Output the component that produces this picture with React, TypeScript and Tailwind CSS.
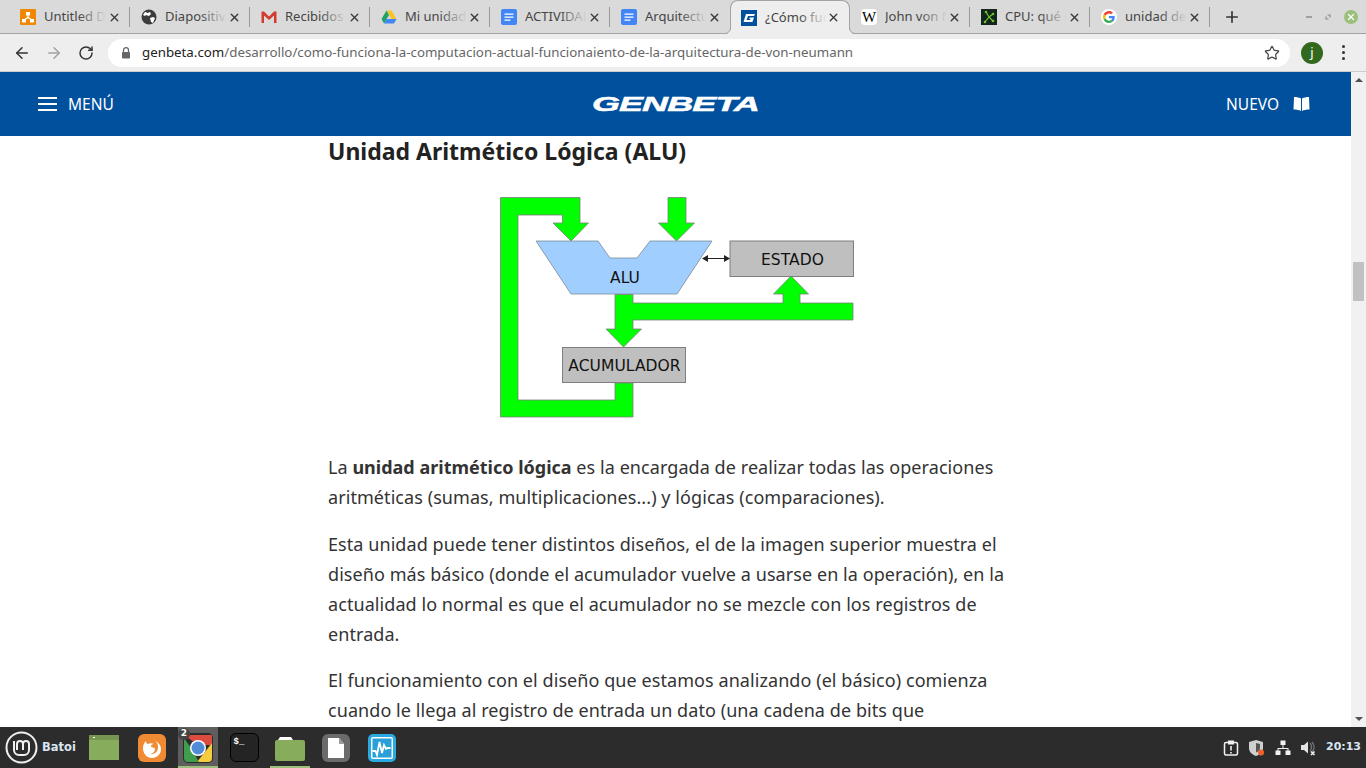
import { ArrowLeft, ArrowRight, RotateCw, Star, Plus, X } from "lucide-react";
import type { ReactNode } from "react";

const uiFont = "font-['Noto_Sans',sans-serif]";

function DocsIcon() {
    return (
        <svg width="16" height="16" viewBox="0 0 16 16">
            <rect width="16" height="16" rx="2" fill="#4285f4" />
            <path d="M3.500 4.500h9v1.300h-9zM3.500 7.500h9v1.300h-9zM3.500 10.500h6v1.300h-6z" fill="#fff" />
        </svg>
    );
}

const tabs: { title: string; icon: ReactNode; active?: boolean }[] = [
    {
        title: "Untitled Diagram",
        icon: (
            <svg width="16" height="16" viewBox="0 0 16 16">
                <rect width="16" height="16" rx="1" fill="#f08705" />
                <path d="M6 3h4v3.500H8.600v1.600l3 1.900H14v3.500h-4V10.600L8 9.300l-2 1.300v2.900H2V10h2.400l3-1.900V6.500H6z" fill="#fff" />
            </svg>
        ),
    },
    {
        title: "Diapositivas",
        icon: (
            <svg width="16" height="16" viewBox="0 0 16 16">
                <circle cx="8" cy="8" r="7.500" fill="#3c3c3c" />
                <path d="M4 3l3 1 2-1 1 2-2 2-3-1-1 1-2-1zM9 9l3-1 2 1-2 5-2-1z" fill="#fff" />
            </svg>
        ),
    },
    {
        title: "Recibidos",
        icon: (
            <svg width="16" height="16" viewBox="0 0 16 16">
                <path d="M0.500 2.500h2.500L8 7.500l5-5h2.500V14H13V6.500L8 11 3 6.500V14H0.500z" fill="#d33b2e" />
            </svg>
        ),
    },
    {
        title: "Mi unidad",
        icon: (
            <svg width="16" height="16" viewBox="0 0 16 16">
                <path d="M5.500 1.500h5L15.500 10h-5z" fill="#f7c325" />
                <path d="M5.500 1.500L.500 10 3 14.500 8 6z" fill="#1fa463" />
                <path d="M3 14.500h10L15.500 10h-10z" fill="#4285f4" />
            </svg>
        ),
    },
    { title: "ACTIVIDADES", icon: <DocsIcon /> },
    { title: "Arquitectura", icon: <DocsIcon /> },
    {
        title: "¿Cómo funciona",
        active: true,
        icon: (
            <svg width="16" height="16" viewBox="0 0 16 16">
                <rect width="16" height="16" fill="#00509d" />
                <path d="M5 4h9l-1 2H7L5.500 10H9l.5-1.200H8L8.700 7.500H13l-1.600 4.500H2.500z" fill="#fff" />
            </svg>
        ),
    },
    {
        title: "John von Neumann",
        icon: (
            <div className="flex h-4 w-4 items-center justify-center rounded-sm bg-white font-['Liberation_Serif',serif] text-[15px] leading-none text-black">
                W
            </div>
        ),
    },
    {
        title: "CPU: qué es",
        icon: (
            <svg width="16" height="16" viewBox="0 0 16 16">
                <rect width="16" height="16" fill="#14251c" />
                <path d="M4 13L8 8 5 3M8 8l4-3M8 8l4 4" stroke="#6cc72b" strokeWidth="1.200" fill="none" />
                <circle cx="4" cy="13" r="1.300" fill="#6cc72b" />
                <circle cx="5" cy="3" r="1.300" fill="#6cc72b" />
                <circle cx="12" cy="5" r="1.300" fill="#6cc72b" />
                <circle cx="12" cy="12" r="1.300" fill="#6cc72b" />
            </svg>
        ),
    },
    {
        title: "unidad de control",
        icon: (
            <div className="flex h-4 w-4 items-center justify-center rounded-full bg-white">
                <svg width="12" height="12" viewBox="0 0 48 48">
                    <path fill="#EA4335" d="M24 9.500c3.500 0 6.700 1.300 9.100 3.400l6.800-6.800C35.800 2.400 30.300 0 24 0 14.600 0 6.500 5.400 2.600 13.200l7.900 6.100C12.400 13.700 17.700 9.500 24 9.500z" />
                    <path fill="#4285F4" d="M47 24.500c0-1.600-.2-3.100-.4-4.500H24v9h12.900c-.6 3-2.300 5.500-4.800 7.200l7.700 6C44.300 38 47 31.800 47 24.500z" />
                    <path fill="#FBBC05" d="M10.500 28.700C10 27.200 9.800 25.600 9.800 24s.3-3.200.7-4.700l-7.900-6.100C1 16.400 0 20.100 0 24s1 7.600 2.600 10.800l7.900-6.100z" />
                    <path fill="#34A853" d="M24 48c6.500 0 11.900-2.100 15.900-5.800l-7.700-6c-2.200 1.400-4.900 2.300-8.200 2.300-6.300 0-11.600-4.200-13.500-9.900l-7.900 6.100C6.500 42.600 14.600 48 24 48z" />
                </svg>
            </div>
        ),
    },
];

function TabStrip() {
    return (
        <div className={`flex h-[34px] shrink-0 items-stretch border-b border-[#a3a3a3] bg-[#dadada] pl-[10px] ${uiFont}`}>
            {tabs.map((t, i) => {
                const nextActive = tabs[i + 1]?.active;
                return (
                    <div
                        key={t.title}
                        className={`relative -mb-px flex w-[120px] shrink-0 items-center pr-[9px] ${i === 0 || t.active ? "pl-[10px]" : "pl-[11px]"} ${t.active ? "rounded-t-lg border border-b-0 border-[#a3a3a3] bg-[#eeeeee]" : ""}`}
                    >
                        {t.active && (
                            <>
                                {/* little flares where the active tab meets the toolbar */}
                                <svg width="6" height="6" viewBox="0 0 6 6" className="absolute -left-[6px] bottom-0">
                                    <path d="M6 0v6H0c3 0 5-2 6-6z" fill="#eeeeee" />
                                    <path d="M0 5.500c3 0 5-2 5.500-5.500" fill="none" stroke="#a3a3a3" />
                                </svg>
                                <svg width="6" height="6" viewBox="0 0 6 6" className="absolute -right-[6px] bottom-0">
                                    <path d="M0 0v6h6C3 6 1 4 0 0z" fill="#eeeeee" />
                                    <path d="M6 5.500C3 5.500 1 3.500.500 0" fill="none" stroke="#a3a3a3" />
                                </svg>
                            </>
                        )}
                        {t.icon}
                        <div className="relative ml-2 w-[62px] overflow-hidden whitespace-nowrap text-[13px] text-[#454545]">
                            {t.title}
                            <div className={`absolute inset-y-0 right-0 w-7 bg-gradient-to-r from-transparent ${t.active ? "to-[#eeeeee]" : "to-[#dadada]"}`} />
                        </div>
                        <X size={13} strokeWidth={2.500} className="ml-auto text-[#3a3a3a]" />
                        {!t.active && !nextActive && (
                            <div className="absolute right-0 top-[7px] h-[20px] w-px bg-[#9a9a9a]" />
                        )}
                    </div>
                );
            })}
            <div className="flex w-[44px] items-center justify-center">
                <Plus size={18} strokeWidth={2.200} className="text-[#333]" />
            </div>
            {/* window buttons */}
            <div className="ml-auto flex items-center gap-[13px] pr-[8px]">
                <div className="h-[2px] w-[6px] bg-[#a0a0a0]" />
                <svg width="6" height="6" viewBox="0 0 6 6" fill="none" stroke="#8c8c8c" strokeWidth="1.200">
                    <path d="M2.500 1H5v2.500M3.500 5H1V2.500" />
                </svg>
                <div className="flex h-[14px] w-[14px] items-center justify-center rounded-full bg-[#9cbf7c]">
                    <X size={10} strokeWidth={3} className="text-white" />
                </div>
            </div>
        </div>
    );
}

function Toolbar() {
    return (
        <div className="flex h-[38px] shrink-0 items-center border-b border-[#cdcdcd] bg-[#eeeeee] pl-[13px]">
            <ArrowLeft size={18} strokeWidth={2} className="text-[#333]" />
            <ArrowRight size={18} strokeWidth={2} className="ml-[14px] text-[#a2a2a2]" />
            <RotateCw size={16} strokeWidth={2.200} className="ml-[15px] text-[#333]" />
            <div className={`ml-[14px] flex h-[28px] w-[1182px] items-center rounded-full bg-white pl-[13px] ${uiFont}`}>
                <svg width="10" height="12" viewBox="0 0 10 12" className="shrink-0">
                    <path d="M2.500 5V3.200a2.500 2.500 0 0 1 5 0V5" fill="none" stroke="#666" strokeWidth="1.300" />
                    <rect x="1" y="5" width="8" height="6.500" rx="0.800" fill="#666" />
                </svg>
                <div className="ml-[11px] whitespace-nowrap text-[13.300px] text-[#666]">
                    <span className="text-[#222]">genbeta.com</span>
                    /desarrollo/como-funciona-la-computacion-actual-funcionaiento-de-la-arquitectura-de-von-neumann
                </div>
                <Star size={16} strokeWidth={1.800} className="ml-auto mr-[10px] text-[#444]" />
            </div>
            <div className={`ml-[11px] flex h-[22px] w-[22px] items-center justify-center rounded-full bg-[#33691e] text-[13px] text-white ${uiFont}`}>
                j
            </div>
            <div className="ml-[19px] flex flex-col gap-[3px]">
                <div className="h-[3px] w-[3px] rounded-full bg-[#333]" />
                <div className="h-[3px] w-[3px] rounded-full bg-[#333]" />
                <div className="h-[3px] w-[3px] rounded-full bg-[#333]" />
            </div>
        </div>
    );
}

function AluDiagram() {
    const green = "#00ff00";
    const edge = "#7f7f7f";
    return (
        <svg width="380" height="240" viewBox="490 185 380 240" className="block">
            <path d="M500.500 197.500H580V223H588.500L571 241 553 223H562.500V215H518V400H615V383H633V417H500.500Z" fill={green} stroke={edge} strokeWidth="0.800" />
            <path d="M668 197.500H686V223H694.500L676.500 241 658.500 223H668Z" fill={green} stroke={edge} strokeWidth="0.800" />
            <path d="M536 241H598L610 258H637L650 241H712L677 294H571Z" fill="#a0cfff" stroke="#7a8a9a" strokeWidth="0.800" />
            <path d="M615 294.500H633V303H783V294H773.500L791 276 808.500 294H800V303H853V320H633V329H641.500L623.500 347 606 329H615Z" fill={green} stroke={edge} strokeWidth="0.800" />
            <rect x="730" y="241" width="123.500" height="35.500" fill="#bfbfbf" stroke={edge} />
            <rect x="562.500" y="347.500" width="123" height="35" fill="#bfbfbf" stroke={edge} />
            <path d="M706 258.500H726" stroke="#222" strokeWidth="1" />
            <path d="M702 258.500l6-3.500v7zM730 258.500l-6-3.500v7z" fill="#222" />
            <g fontFamily="'DejaVu Sans', sans-serif" fontSize="15.500" fill="#111" textAnchor="middle">
                <text x="625" y="282.500">ALU</text>
                <text x="792.500" y="264.500">ESTADO</text>
                <text x="624.500" y="370.500">ACUMULADOR</text>
            </g>
        </svg>
    );
}

function Article() {
    return (
        <article className="w-[677px] shrink-0 font-['Noto_Sans',sans-serif] text-[18px] leading-[30px] tracking-[0.07px] text-[#333]">
            <h2 className="text-[23px] font-bold leading-[30px] tracking-normal text-[#222]">Unidad Aritmético Lógica (ALU)</h2>
            <div className="mb-[27px] ml-[162px] mt-[19px]">
                <AluDiagram />
            </div>
            <p className="mb-[17px]">
                La <strong className="tracking-normal">unidad aritmético lógica</strong> es la encargada de realizar todas las operaciones aritméticas (sumas, multiplicaciones...) y lógicas (comparaciones).
            </p>
            <p className="mb-[16px]">
                Esta unidad puede tener distintos diseños, el de la imagen superior muestra el diseño más básico (donde el acumulador vuelve a usarse en la operación), en la actualidad lo normal es que el acumulador no se mezcle con los registros de entrada.
            </p>
            <p>
                El funcionamiento con el diseño que estamos analizando (el básico) comienza cuando le llega al registro de entrada un dato (una cadena de bits que representa una instrucción)
            </p>
        </article>
    );
}

function Scrollbar() {
    return (
        <div className="relative w-[15px] shrink-0 bg-[#f1f1f1]">
            <div className="absolute left-[4px] top-[6px] h-0 w-0 border-x-[4px] border-b-[4px] border-x-transparent border-b-[#505050]" />
            <div className="absolute left-[2px] top-[190px] h-[39px] w-[11px] bg-[#c1c1c1]" />
            <div className="absolute bottom-[6px] left-[4px] h-0 w-0 border-x-[4px] border-t-[4px] border-x-transparent border-t-[#505050]" />
        </div>
    );
}

function Taskbar() {
    const cell = "relative flex h-full w-[46px] items-center justify-center";
    return (
        <div className="flex h-[41px] shrink-0 items-center bg-[#2c2c2c] pl-[5px]">
            <svg width="33" height="33" viewBox="0 0 33 33">
                <circle cx="16.500" cy="16.500" r="15" fill="none" stroke="#efefef" strokeWidth="2" />
                <path d="M9 10v9a5 5 0 0 0 5 5h5a5 5 0 0 0 5-5v-6a3 3 0 0 0-6 0v6M18 13a3 3 0 0 0-6 0v6" fill="none" stroke="#efefef" strokeWidth="2" />
            </svg>
            <span className="ml-[4px] w-[39px] font-['DejaVu_Sans',sans-serif] text-[11.500px] font-bold text-[#d8e6f2]">Batoi</span>
            <div className="flex h-full">
                <div className={cell}>
                    <div className="relative h-[25px] w-[30px] border-t-[5px] border-[#76964f] bg-[#87ac5c]">
                        <div className="absolute left-[4px] -top-[3px] h-px w-[2px] bg-white" />
                    </div>
                </div>
                <div className={`${cell} ml-[2px]`}>
                    <svg width="28" height="28" viewBox="0 0 28 28">
                        <rect width="28" height="28" rx="6" fill="#f08a33" />
                        <path d="M5 14c0-3 1-5 3-7 0 2 1 3 2 3 2-1 4-1 6 0-2 0-3 1-3 2 0 2 4 1 4 3 0 3-3 5-5 5 4 1 8-2 8-7 0-3-1-5-3-6 3 1 6 4 6 8 0 5-4 9-9 9s-9-4-9-10z" fill="#fff" />
                    </svg>
                </div>
                <div className={cell}>
                    <div className="absolute inset-y-0 left-[3px] w-[40px] bg-[#5e5e5e]">
                        <div className="absolute bottom-0 inset-x-0 h-[2px] bg-[#9cbf7c]" />
                    </div>
                    <svg width="30" height="30" viewBox="0 0 30 30" className="relative">
                        <rect width="30" height="30" rx="5" fill="#2c2c2c" />
                        <path d="M1 2h28v10H15z" fill="#dd4b3e" />
                        <path d="M29 10v15a4 4 0 0 1-4 4H14z" fill="#f8cd3d" />
                        <path d="M1 5v20a4 4 0 0 0 4 4h11L8 15z" fill="#3f9d4d" />
                        <circle cx="15" cy="15" r="8" fill="#fff" />
                        <circle cx="15" cy="15" r="6.500" fill="#4f8bd6" />
                    </svg>
                    <div className="absolute left-[3px] top-[1px] flex h-[12px] w-[12px] items-center justify-center rounded-full bg-[#444] font-['DejaVu_Sans',sans-serif] text-[9px] font-bold text-white">
                        2
                    </div>
                </div>
                <div className={cell}>
                    <div className="h-[29px] w-[29px] rounded-md border border-black bg-[#242424] px-[3px] pt-[1px] font-['Liberation_Mono',monospace] text-[9px] font-bold leading-[14px] text-white">
                        $_
                    </div>
                </div>
                <div className={cell}>
                    <div className="absolute bottom-0 left-[3px] h-[2px] w-[40px] bg-[#9cbf7c]" />
                    <svg width="30" height="26" viewBox="0 0 30 26">
                        <path d="M3 5l2-3h11l2 3z" fill="#fff" />
                        <rect x="0" y="5" width="30" height="21" rx="2" fill="#87ac5c" />
                    </svg>
                </div>
                <div className={cell}>
                    <div className="flex h-[28px] w-[28px] items-center justify-center rounded-md bg-[#6b6b6b]">
                        <svg width="16" height="20" viewBox="0 0 16 20">
                            <path d="M0 0h11l5 6v14H0z" fill="#fff" />
                            <path d="M11 0l5 6h-5z" fill="#9a9a9a" />
                        </svg>
                    </div>
                </div>
                <div className={cell}>
                    <svg width="28" height="28" viewBox="0 0 28 28">
                        <rect width="28" height="28" rx="5" fill="#29abe2" />
                        <rect x="3" y="3" width="22" height="22" rx="2" fill="#fff" />
                        <rect x="4.500" y="4.500" width="19" height="19" fill="#29a0d8" />
                        <path d="M4.500 17h3l1.500 4 2.500-13 2.500 11 2-8 2 4 1.500-1h3" fill="none" stroke="#fff" strokeWidth="1.800" />
                    </svg>
                </div>
            </div>
            {/* tray */}
            <div className="ml-auto flex items-center pr-[5px] text-[#e8e8e8]">
                <svg width="16" height="16" viewBox="0 0 16 16" fill="none">
                    <rect x="1.500" y="2.500" width="13" height="12.500" rx="1.500" stroke="#f2f2f2" strokeWidth="1.500" />
                    <rect x="5" y="0.500" width="6" height="4" fill="#f2f2f2" />
                    <path d="M8 6v4.500M8 12v1.500" stroke="#f2f2f2" strokeWidth="1.600" />
                </svg>
                <svg width="18" height="18" viewBox="0 0 18 18" className="ml-[9px]">
                    <path d="M8 1l7 2v6c0 4-3 6.500-7 8-4-1.500-7-4-7-8V3z" fill="#cfcfcf" />
                    <path d="M8 4l4 1v4c0 2-2 3.500-4 4.500z" fill="#555" />
                    <circle cx="13" cy="13.500" r="3" fill="#f0622d" />
                </svg>
                <svg width="16" height="16" viewBox="0 0 16 16" className="ml-[9px]" fill="#f2f2f2">
                    <rect x="5.500" y="0.500" width="5" height="4.500" />
                    <rect x="0.500" y="10.500" width="5" height="4.500" />
                    <rect x="10.500" y="10.500" width="5" height="4.500" />
                    <path d="M7.500 5h1v3H13.500v3h-1V9h-9v2h-1V8h5z" />
                </svg>
                <svg width="16" height="16" viewBox="0 0 16 16" className="ml-[9px]">
                    <path d="M1 5h3l4-3.500v12L4 10H1z" fill="#e4e4e4" />
                    <path d="M10 3c2 2 2 6 0 8M12 2c2.500 3 2.500 7 0 10" stroke="#777" strokeWidth="1.200" fill="none" />
                    <path d="M11 11.500l3.500 3.500M14.500 11.500L11 15" stroke="#f2f2f2" strokeWidth="1.500" />
                </svg>
                <span className="ml-[10px] font-['DejaVu_Sans',sans-serif] text-[11px] font-bold text-[#d8e6f2]">20:13</span>
            </div>
        </div>
    );
}

export default function App() {
    return (
        <div className="flex h-screen w-full flex-col overflow-hidden bg-white">
            <TabStrip />
            <Toolbar />
            <div className="flex min-h-0 flex-1">
                <div className="flex min-w-0 flex-1 flex-col">
                    <header className="flex h-[64px] shrink-0 items-center justify-between bg-[#00509d] pl-[38px] pr-[41px] font-['Noto_Sans',sans-serif] text-[15.500px] text-white">
                        <div className="flex items-center gap-[11px]">
                            <div className="flex w-[19px] flex-col gap-[4px]">
                                <div className="h-[2px] bg-white" />
                                <div className="h-[2px] bg-white" />
                                <div className="h-[2px] bg-white" />
                            </div>
                            <span className="pt-[2px]">MENÚ</span>
                        </div>
                        <span className="ml-[11px] origin-center scale-x-[1.8] font-['Liberation_Sans',sans-serif] text-[20px] font-bold italic leading-none tracking-[-0.5px] [-webkit-text-stroke:0.5px_white]">
                            GENBETA
                        </span>
                        <div className="flex items-center gap-[14px]">
                            <span className="pt-[2px]">NUEVO</span>
                            <svg width="17" height="14" viewBox="0 0 17 14" fill="#fff">
                                <path d="M1 0c3 0 5 .5 7 1.500V14c-2-1-4-1.500-7.500-1.500zM16 0c-3 0-5 .5-7 1.500V14c2-1 4-1.500 7.500-1.500z" />
                            </svg>
                        </div>
                    </header>
                    <main className="flex min-h-0 flex-1 justify-start overflow-hidden pl-[328px]">
                        <Article />
                    </main>
                </div>
                <Scrollbar />
            </div>
            <Taskbar />
        </div>
    );
}
